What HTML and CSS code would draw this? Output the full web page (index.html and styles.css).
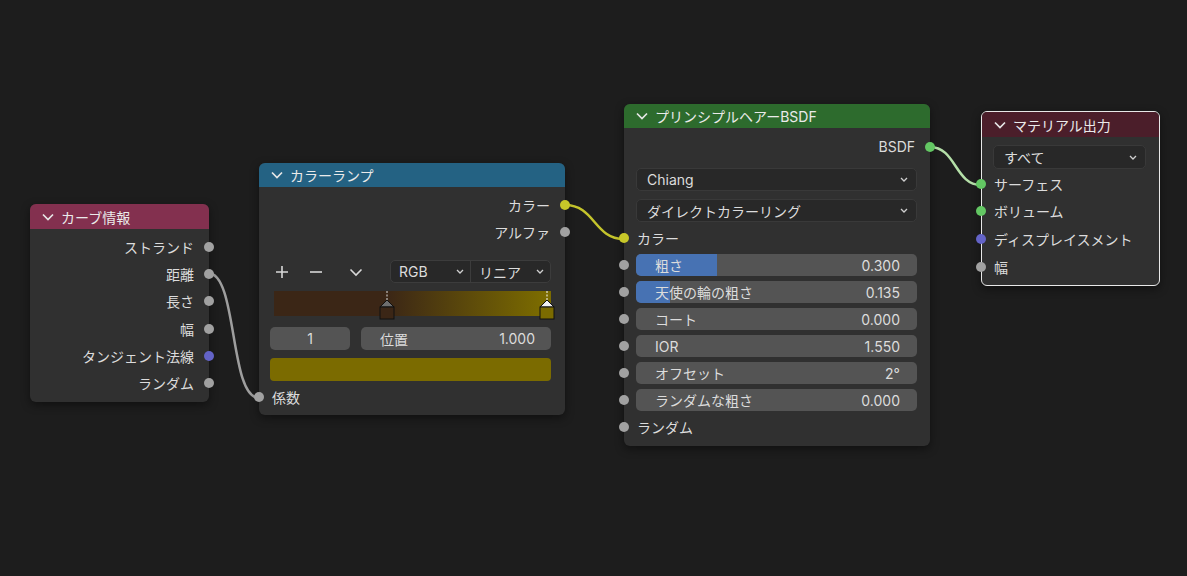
FILE: index.html
```html
<!DOCTYPE html>
<html lang="ja">
<head>
  <meta charset="UTF-8" />
  <title>Node Editor</title>
  <link rel="stylesheet" href="styles.css">
</head>
<body>
<div class="canvas">
  <svg class="wires" width="1187" height="576">
    <path d="M208 273 C 238 273, 229 398, 259 398" stroke="#9e9e9e" />
    <path d="M565 205 C 595 205, 594 239, 624 239" stroke="#c4c42c" />
    <path d="M930 147 C 956 147, 955 185, 981 185" stroke="#b4dfa8" />
  </svg>

  <!-- カーブ情報 -->
  <div class="node curve">
    <div class="head"><svg class="chev" width="12" height="8" viewBox="0 0 12 8"><path d="M1 1.5l5 5 5-5"/></svg>カーブ情報</div>
    <div class="body">
      <div class="row out">ストランド<span class="sock"></span></div>
      <div class="row out">距離<span class="sock"></span></div>
      <div class="row out">長さ<span class="sock"></span></div>
      <div class="row out">幅<span class="sock"></span></div>
      <div class="row out">タンジェント法線<span class="sock vec"></span></div>
      <div class="row out">ランダム<span class="sock"></span></div>
    </div>
  </div>

  <!-- カラーランプ -->
  <div class="node ramp">
    <div class="head"><svg class="chev" width="12" height="8" viewBox="0 0 12 8"><path d="M1 1.5l5 5 5-5"/></svg>カラーランプ</div>
    <div class="body">
      <div class="row out">カラー<span class="sock col"></span></div>
      <div class="row out">アルファ<span class="sock"></span></div>
      <div class="ramp-tools">
        <svg class="tool" width="14" height="14" viewBox="0 0 14 14"><path d="M7 1v12M1 7h12"/></svg>
        <svg class="tool minus" width="14" height="14" viewBox="0 0 14 14"><path d="M1 7h12"/></svg>
        <svg class="tool more" width="14" height="14" viewBox="0 0 14 14"><path d="M1.5 4.5l5.5 5.5 5.5-5.5"/></svg>
        <div class="combo">
          <div class="combo-part">RGB<svg class="mini" width="8" height="5" viewBox="0 0 8 5"><path d="M1 1l3 3 3-3"/></svg></div>
          <div class="combo-part">リニア<svg class="mini" width="8" height="5" viewBox="0 0 8 5"><path d="M1 1l3 3 3-3"/></svg></div>
        </div>
      </div>
      <div class="gradient">
        <svg class="stops" width="293" height="30" viewBox="0 0 293 30">
          <line x1="113" y1="0" x2="113" y2="9" stroke="#ddd" stroke-dasharray="2 1.5"/>
          <polygon points="106,16 113,9 120,16" fill="#6e6e6e" stroke="#111"/>
          <rect x="106" y="16" width="14" height="12" fill="#3b2616" stroke="#111"/>
          <line x1="273" y1="0" x2="273" y2="9" stroke="#fff" stroke-dasharray="2 1.5"/>
          <polygon points="266,16 273,9 280,16" fill="#f0f0f0" stroke="#111"/>
          <rect x="266" y="16" width="14" height="12" fill="#7b6b00" stroke="#111"/>
        </svg>
      </div>
      <div class="pos-row">
        <div class="num center">1</div>
        <div class="num wide"><span>位置</span><span>1.000</span></div>
      </div>
      <div class="swatch"></div>
      <div class="row in">係数<span class="sock"></span></div>
    </div>
  </div>

  <!-- プリンシプルヘアーBSDF -->
  <div class="node hair">
    <div class="head"><svg class="chev" width="12" height="8" viewBox="0 0 12 8"><path d="M1 1.5l5 5 5-5"/></svg>プリンシプルヘアーBSDF</div>
    <div class="body">
      <div class="row out">BSDF<span class="sock shader"></span></div>
      <div class="select">Chiang<svg class="mini" width="8" height="5" viewBox="0 0 8 5"><path d="M1 1l3 3 3-3"/></svg></div>
      <div class="select">ダイレクトカラーリング<svg class="mini" width="8" height="5" viewBox="0 0 8 5"><path d="M1 1l3 3 3-3"/></svg></div>
      <div class="row in">カラー<span class="sock col"></span></div>
      <div class="slot"><span class="sock"></span><div class="slider"><div class="fill" style="width:29%"></div><span>粗さ</span><span>0.300</span></div></div>
      <div class="slot"><span class="sock"></span><div class="slider"><div class="fill" style="width:12%"></div><span>天使の輪の粗さ</span><span>0.135</span></div></div>
      <div class="slot"><span class="sock"></span><div class="slider"><span>コート</span><span>0.000</span></div></div>
      <div class="slot"><span class="sock"></span><div class="slider"><span>IOR</span><span>1.550</span></div></div>
      <div class="slot"><span class="sock"></span><div class="slider"><span>オフセット</span><span>2°</span></div></div>
      <div class="slot"><span class="sock"></span><div class="slider"><span>ランダムな粗さ</span><span>0.000</span></div></div>
      <div class="row in">ランダム<span class="sock"></span></div>
    </div>
  </div>

  <!-- マテリアル出力 -->
  <div class="node output">
    <div class="head"><svg class="chev" width="12" height="8" viewBox="0 0 12 8"><path d="M1 1.5l5 5 5-5"/></svg>マテリアル出力</div>
    <div class="body">
      <div class="select">すべて<svg class="mini" width="8" height="5" viewBox="0 0 8 5"><path d="M1 1l3 3 3-3"/></svg></div>
      <div class="row in">サーフェス<span class="sock shader"></span></div>
      <div class="row in">ボリューム<span class="sock shader"></span></div>
      <div class="row in">ディスプレイスメント<span class="sock vec"></span></div>
      <div class="row in">幅<span class="sock"></span></div>
    </div>
  </div>
</div>
</body>
</html>
```

FILE: styles.css
```css
body {
  margin: 0;
  background: #1d1d1d;
  font-family: Inter, "Noto Sans CJK JP", sans-serif;
  font-size: 14px;
  color: #dcdcdc;
}
.canvas {
  position: relative;
  width: 1187px;
  height: 576px;
  overflow: hidden;
}
.wires {
  position: absolute;
  left: 0;
  top: 0;
}
.wires path {
  fill: none;
  stroke-width: 2.5;
}

/* nodes */
.node {
  position: absolute;
  background: #303030;
  border-radius: 6px;
  box-sizing: border-box;
  box-shadow: 0 3px 10px rgba(0,0,0,0.45);
}
.head {
  height: 25px;
  display: flex;
  align-items: center;
  gap: 7px;
  padding-left: 12px;
  border-radius: 6px 6px 0 0;
  color: #eaeaea;
}
.chev path {
  fill: none;
  stroke: #e6e6e6;
  stroke-width: 1.7;
}
.body {
  padding: 4px 0 5px;
}
.row {
  height: 27px;
  display: flex;
  align-items: center;
  position: relative;
  padding: 0 15px 0 13px;
}
.row.out {
  justify-content: flex-end;
}
.sock {
  position: absolute;
  top: 50%;
  width: 10px;
  height: 10px;
  margin-top: -5px;
  border-radius: 50%;
  background: #a1a1a1;
}
.out .sock { right: -5px; }
.in .sock, .slot .sock { left: -5px; }
.sock.vec { background: #6363c7; }
.sock.col { background: #c7c729; }
.sock.shader { background: #63c763; }

.mini path {
  fill: none;
  stroke: #cfcfcf;
  stroke-width: 1.3;
}

/* カーブ情報 */
.curve {
  left: 30px;
  top: 204px;
  width: 179px;
}
.curve .head { background: #83304f; }
.curve .row { height: 27.3px; }

/* カラーランプ */
.ramp {
  left: 259px;
  top: 163px;
  width: 306px;
}
.ramp .head { background: #246283; height: 24px; }
.ramp .body { padding-top: 4px; }
.ramp-tools {
  display: flex;
  align-items: center;
  height: 23px;
  margin: 15px 14px 0 16px;
}
.tool path {
  fill: none;
  stroke: #d8d8d8;
  stroke-width: 1.6;
}
.tool.minus { margin-left: 20px; }
.tool.more { margin-left: 26px; }
.combo {
  margin-left: auto;
  width: 161px;
  height: 23px;
  display: flex;
  background: #282828;
  border: 1px solid #3c3c3c;
  border-radius: 5px;
  box-sizing: border-box;
}
.combo-part {
  flex: 1;
  display: flex;
  align-items: center;
  justify-content: space-between;
  padding: 0 6px 0 8px;
}
.combo-part + .combo-part {
  border-left: 1px solid #3c3c3c;
}
.gradient {
  position: relative;
  height: 25px;
  margin: 8px 14px 0 15px;
  background: linear-gradient(to right, #3b2616 0%, #3b2616 40.8%, #7b6b00 97%, #7b6b00 100%);
}
.stops {
  position: absolute;
  left: 0;
  top: 0;
  overflow: visible;
}
.pos-row {
  display: flex;
  gap: 11px;
  margin: 11px 14px 0 11px;
}
.num {
  height: 23px;
  background: #545454;
  border-radius: 5px;
  display: flex;
  align-items: center;
}
.num.center {
  width: 80px;
  justify-content: center;
}
.num.wide {
  flex: 1;
  justify-content: space-between;
  padding: 0 16px 0 19px;
}
.swatch {
  height: 23px;
  margin: 8px 14px 0 11px;
  background: #7b6b00;
  border-radius: 4px;
}
.ramp .row.in { margin-top: 2px; }

/* プリンシプルヘアーBSDF */
.hair {
  left: 624px;
  top: 104px;
  width: 306px;
}
.hair .head { background: #2d6b2d; height: 24px; }
.hair .body { padding-top: 5px; padding-bottom: 6px; }
.select {
  height: 23px;
  margin: 8px 13px 0 12px;
  padding: 0 8px 0 10px;
  display: flex;
  align-items: center;
  justify-content: space-between;
  background: #282828;
  border: 1px solid #393939;
  border-radius: 5px;
  box-sizing: border-box;
}
.hair .row.in { margin-top: 2px; }
.slot {
  position: relative;
  margin: 5px 13px 0 12px;
}
.slot .sock { left: -17px; }
.hair .row.in + .slot { margin-top: 3px; }
.slider {
  position: relative;
  height: 22px;
  display: flex;
  align-items: center;
  justify-content: space-between;
  padding: 0 17px 0 19px;
  background: #545454;
  border-radius: 5px;
  overflow: hidden;
}
.slider span {
  position: relative;
}
.fill {
  position: absolute;
  left: 0;
  top: 0;
  bottom: 0;
  background: #4772b3;
}
.slot + .row.in { margin-top: 2px; }

/* マテリアル出力 */
.output {
  left: 981px;
  top: 111px;
  width: 179px;
  border: 1px solid #e8e8e8;
}
.output .head { background: #4b1e2a; border-radius: 5px 5px 0 0; }
.output .select { margin: 4px 13px 0 11px; height: 24px; }
.output .row { height: 27.6px; padding-left: 12px; }
.output .select + .row { margin-top: 1px; }
.output .in .sock { left: -6px; }
```
